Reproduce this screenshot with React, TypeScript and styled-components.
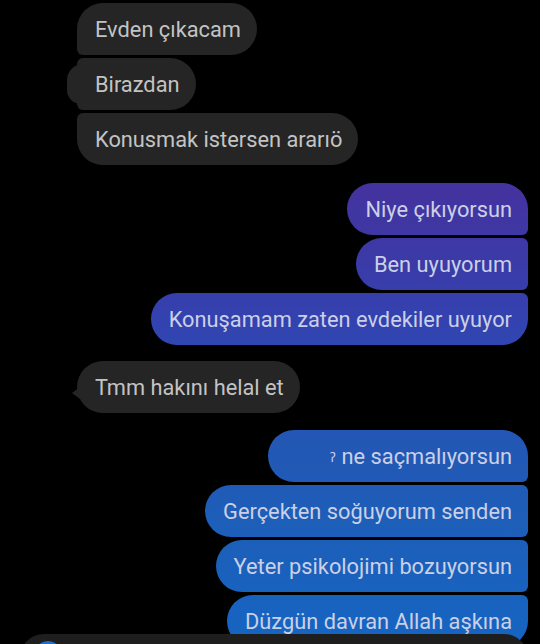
import React from "react";
import styled, { createGlobalStyle, css } from "styled-components";

const Global = createGlobalStyle`
  html, body { margin: 0; padding: 0; background: #000; }
  body { font-family: Roboto, "Noto Sans", Arial, sans-serif; overflow: hidden; }
`;

const Screen = styled.div`
  width: 540px;
  height: 644px;
  background: #000;
  padding-top: 3px;
  box-sizing: border-box;
  display: flex;
  flex-direction: column;
  overflow: hidden;
  position: relative;
`;

const Group = styled.div<{ $side: "in" | "out"; $top: number }>`
  display: flex;
  flex-direction: column;
  gap: 3px;
  margin-top: ${(p) => p.$top}px;
  align-items: ${(p) => (p.$side === "in" ? "flex-start" : "flex-end")};
  padding: ${(p) => (p.$side === "in" ? "0 0 0 77px" : "0 12px 0 0")};
`;

type Pos = "first" | "middle" | "last" | "single";

const big = 26;
const small = 6;

const radius = (side: "in" | "out", pos: Pos) => {
  const topIn = pos === "first" || pos === "single" ? big : small;
  const botIn = pos === "last" || pos === "single" ? big : small;
  if (side === "in") return `${topIn}px ${big}px ${big}px ${botIn}px`;
  return `${big}px ${topIn}px ${botIn}px ${big}px`;
};

const Bubble = styled.div<{ $side: "in" | "out"; $pos: Pos; $tail?: "blob" | "point"; $padL?: number }>`
  position: relative;
  height: 52px;
  box-sizing: border-box;
  padding: 0 16px 0 ${(p) => p.$padL ?? 18}px;
  display: flex;
  align-items: center;
  font-size: 21.8px;
  white-space: nowrap;
  border-radius: ${(p) => radius(p.$side, p.$pos)};
  ${(p) =>
    p.$side === "in"
      ? css`
          background: #252525;
          color: #c3c3c3;
        `
      : css`
          background: linear-gradient(
              180deg,
              #4a2e9c 0px,
              #43339f 190px,
              #3b3aa7 260px,
              #3342b0 320px,
              #2456b4 430px,
              #1d5eb8 520px,
              #1565c2 644px
            )
            fixed;
          color: #cbd0e6;
        `}
  ${(p) =>
    p.$tail === "blob" &&
    css`
      &::before {
        content: "";
        position: absolute;
        left: -10px;
        top: 6px;
        width: 22px;
        height: 40px;
        background: #252525;
        border-radius: 16px 4px 4px 14px;
      }
    `}
  ${(p) =>
    p.$tail === "point" &&
    css`
      &::before {
        content: "";
        position: absolute;
        left: -5px;
        top: 26px;
        width: 0;
        height: 0;
        border-top: 6px solid transparent;
        border-bottom: 6px solid transparent;
        border-right: 8px solid #252525;
      }
    `}
`;

const Label = styled.span`
  position: relative;
`;

const Mark = styled.span`
  font-size: 13px;
  margin-right: 6px;
  vertical-align: 2px;
`;

const Composer = styled.div`
  position: absolute;
  left: 20px;
  right: 12px;
  top: 634px;
  height: 40px;
  background: #1e1e1e;
  border-radius: 24px 24px 0 0;
`;

const Avatar = styled.div`
  position: absolute;
  left: 14px;
  top: 7px;
  width: 28px;
  height: 28px;
  border-radius: 50%;
  background: #1a6fd0;
`;

type Msg = { text: string; tail?: "blob" | "point"; mark?: boolean; padL?: number };
type G = { side: "in" | "out"; top: number; msgs: Msg[] };

const groups: G[] = [
  {
    side: "in",
    top: 0,
    msgs: [
      { text: "Evden çıkacam" },
      { text: "Birazdan", tail: "blob" },
      { text: "Konusmak istersen ararıö" },
    ],
  },
  {
    side: "out",
    top: 18,
    msgs: [
      { text: "Niye çıkıyorsun" },
      { text: "Ben uyuyorum" },
      { text: "Konuşamam zaten evdekiler uyuyor" },
    ],
  },
  { side: "in", top: 16, msgs: [{ text: "Tmm hakını helal et", tail: "point" }] },
  {
    side: "out",
    top: 17,
    msgs: [
      { text: "ne saçmalıyorsun", mark: true, padL: 62 },
      { text: "Gerçekten soğuyorum senden" },
      { text: "Yeter psikolojimi bozuyorsun" },
      { text: "Düzgün davran Allah aşkına" },
    ],
  },
];

const posOf = (i: number, n: number): Pos =>
  n === 1 ? "single" : i === 0 ? "first" : i === n - 1 ? "last" : "middle";

export default function App() {
  return (
    <>
      <Global />
      <Screen>
        {groups.map((g, gi) => (
          <Group key={gi} $side={g.side} $top={g.top}>
            {g.msgs.map((m, i) => (
              <Bubble
                key={i}
                $side={g.side}
                $pos={posOf(i, g.msgs.length)}
                $tail={m.tail}
                $padL={m.padL}
              >
                <Label>
                  {m.mark && <Mark>ʔ</Mark>}
                  {m.text}
                </Label>
              </Bubble>
            ))}
          </Group>
        ))}
        <Composer>
          <Avatar />
        </Composer>
      </Screen>
    </>
  );
}
